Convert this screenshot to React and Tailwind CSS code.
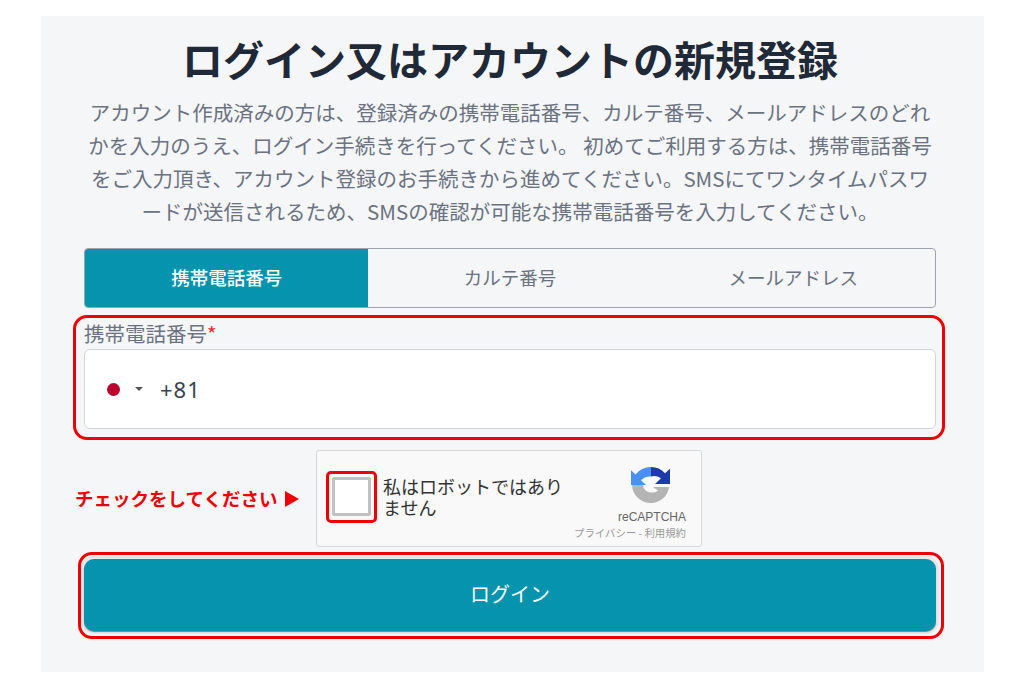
const font = { fontFamily: '"Noto Sans CJK JP", "Noto Sans", sans-serif' }

function RecaptchaLogo() {
  return (
    <svg width="40" height="38" viewBox="0 0 40 40" preserveAspectRatio="none">
      <path d="M20 1a19 19 0 0 0-15.500 8L0 4.500V20h15l-5-5a12 12 0 0 1 10-4z" fill="#4a90f2" />
      <path d="M20 1a19 19 0 0 1 14 6.500L39 3v16H24l6-6a12 12 0 0 0-10-2z" fill="#1c3aa9" />
      <path d="M1 20h11a8 8 0 0 0 8 8 11 11 0 0 0 7-2l-5-4h16a19 19 0 0 1-18 17A19.500 19.500 0 0 1 1 20z" fill="#b4b4b4" />
    </svg>
  )
}

export default function App() {
  return (
    <div className="min-h-screen bg-white pt-4" style={font}>
      <div className="ml-[41px] h-[656px] w-[943px] bg-[#f5f6f8] pr-[48px] pl-[43px]">
        {/* Heading */}
        <h1 className="pt-[16px] text-center text-[41px] leading-[52px] font-bold whitespace-nowrap text-[#1f2937]">
          ログイン又はアカウントの新規登録
        </h1>
        <p className="mt-[12px] text-center text-[20.5px] leading-[33px] text-[#6b7280]">
          アカウント作成済みの方は、登録済みの携帯電話番号、カルテ番号、メールアドレスのどれかを入力のうえ、ログイン手続きを行ってください。 初めてご利用する方は、携帯電話番号をご入力頂き、アカウント登録のお手続きから進めてください。SMSにてワンタイムパスワードが送信されるため、SMSの確認が可能な携帯電話番号を入力してください。
        </p>

        {/* Tabs */}
        <div className="mt-[20px] grid h-[60px] grid-cols-3 overflow-hidden rounded border border-[#9ca3af] text-[18.500px] text-[#6b7280]">
          <div className="flex items-center justify-center bg-[#0693ad] font-medium text-white">携帯電話番号</div>
          <div className="flex items-center justify-center">カルテ番号</div>
          <div className="flex items-center justify-center">メールアドレス</div>
        </div>

        {/* Phone field */}
        <div className="mt-[7px] mr-[-9px] ml-[-11px] h-[125px] rounded-[14px] border-[3px] border-[#ee0000] pr-[6px] pl-[8px]">
          <div className="text-[20.500px] leading-[31px] text-[#6b7280]">
            携帯電話番号<span className="text-red-500">*</span>
          </div>
          <div className="flex h-[80px] items-center rounded-md border border-[#d1d5db] bg-white pl-[22px] text-[#374151]">
            <span className="h-[13px] w-[13px] rounded-full bg-[#bc002d]" />
            <span className="ml-[15px] h-0 w-0 border-x-[4px] border-t-[4.500px] border-x-transparent border-t-[#555]" />
            <span className="ml-[17px] text-[22px] tracking-[1px]" style={{ fontFamily: '"Noto Sans", sans-serif' }}>+81</span>
          </div>
        </div>

        {/* Captcha */}
        <div className="mt-[10px] flex items-center">
          <div className="-ml-[9px] flex w-[225px] items-center justify-between">
            <span className="text-[18.500px] font-bold whitespace-nowrap text-[#ee0000]">チェックをしてください</span>
            <span className="mr-[1px] h-0 w-0 border-y-[8px] border-l-[14px] border-y-transparent border-l-[#ee0000]" />
          </div>
          <div className="ml-[16px] flex h-[97px] w-[386px] items-center rounded-[3px] border border-[#d8d8d8] bg-[#f9f9f9] pl-[9px]">
            <div className="mb-[4px] flex h-[52px] w-[51px] items-center justify-center rounded-[5px] border-[3px] border-[#ee0000]">
              <div className="h-[39px] w-[39px] rounded-[2px] border-[3px] border-[#c1c1c1] bg-white" />
            </div>
            <div className="mb-[4px] ml-[6px] w-[190px] text-[18px] leading-[21px] text-[#333]">私はロボットではありません</div>
            <div className="mr-[15px] ml-auto flex flex-col items-end pt-[9px]">
              <div className="mr-[15px]">
                <RecaptchaLogo />
              </div>
              <div className="mt-[6px] text-[12px] leading-[14px] text-[#666]" style={{ fontFamily: '"Liberation Sans", sans-serif' }}>reCAPTCHA</div>
              <div className="mt-[2px] text-[10.400px] leading-[14px] whitespace-nowrap text-[#999]">プライバシー - 利用規約</div>
            </div>
          </div>
        </div>

        {/* Login button */}
        <div className="mt-[5px] mr-[-8px] ml-[-6px] h-[87px] rounded-[14px] border-[3px] border-[#ee0000] pt-[4px] pr-[5px] pl-[3px]">
          <button className="h-[72px] w-full rounded-[10px] bg-[#0693ad] pb-[3px] text-[20px] text-white shadow-[0_1px_1px_rgba(0,0,0,0.45),0_0_0_3px_#e5e7eb]">
            ログイン
          </button>
        </div>
      </div>
    </div>
  )
}
